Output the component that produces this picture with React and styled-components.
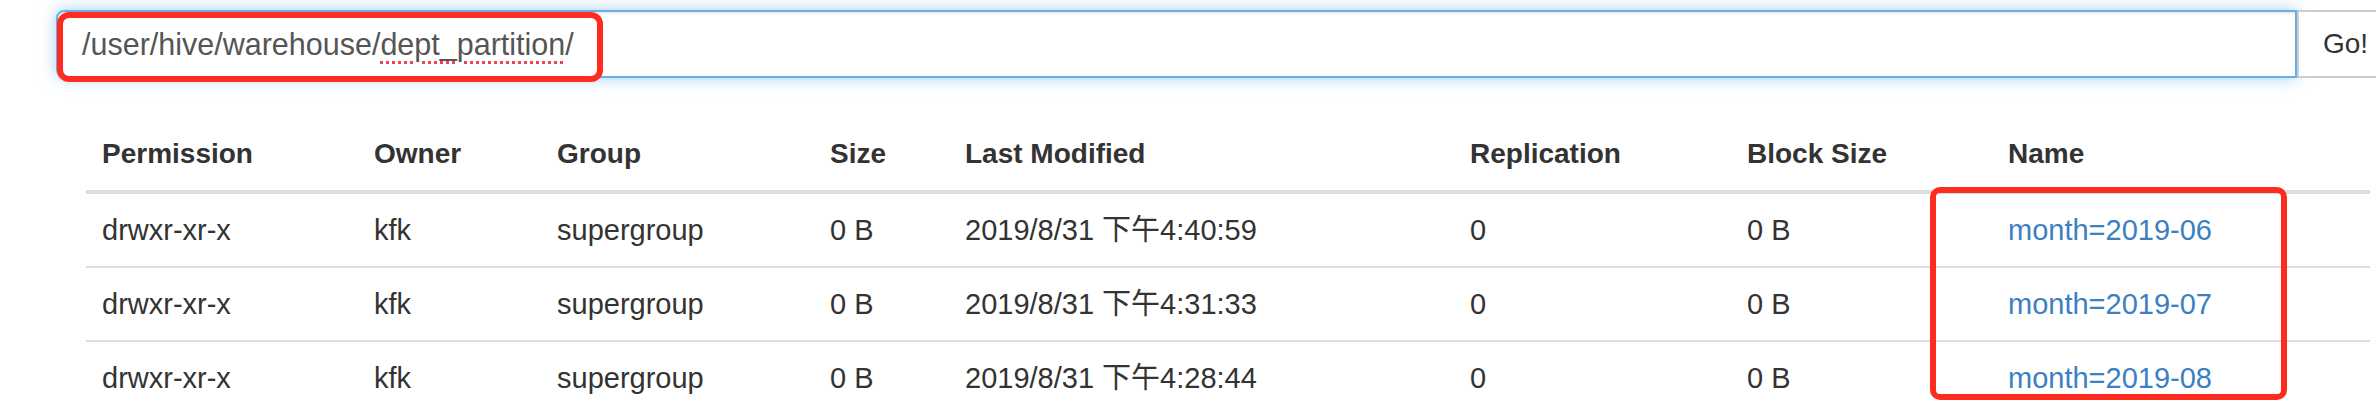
import React from "react";
import styled, { createGlobalStyle } from "styled-components";

const GlobalStyle = createGlobalStyle`
  html, body {
    margin: 0;
    padding: 0;
    overflow: hidden;
    background: #fff;
  }
  body {
    font-family: "Liberation Sans", "Noto Sans CJK SC", sans-serif;
    font-size: 28px;
    line-height: 40px;
    color: #333;
  }
`;

const Page = styled.div`
  padding: 10px 0 0 56px;
  width: 2400px;
`;

const InputGroup = styled.div`
  position: relative;
  display: flex;
  height: 68px;
`;

const Field = styled.div`
  box-sizing: border-box;
  width: 2241px;
  height: 68px;
  padding: 12px 24px;
  border: 2px solid #66afe9;
  border-radius: 8px 0 0 8px;
  box-shadow: inset 0 2px 2px rgba(0, 0, 0, 0.075),
    0 0 16px rgba(102, 175, 233, 0.6);
  font-size: 30.5px;
  line-height: 40px;
  color: #555;
  white-space: nowrap;
`;

const Misspelled = styled.span`
  text-decoration: underline dotted #e9474d;
  text-decoration-thickness: 3px;
  text-underline-offset: 6px;
`;

const GoButton = styled.button`
  box-sizing: border-box;
  height: 68px;
  padding: 12px 24px;
  border: 2px solid #ccc;
  border-radius: 0 8px 8px 0;
  background: #fff;
  color: #333;
  font-family: inherit;
  font-size: 28px;
  line-height: 40px;
`;

const Highlight = styled.div`
  position: absolute;
  left: ${(p) => p.left}px;
  top: ${(p) => p.top}px;
  width: ${(p) => p.width}px;
  height: ${(p) => p.height}px;
  box-sizing: border-box;
  border: 6px solid #fe2c1e;
  border-radius: ${(p) => p.radius || 10}px;
  pointer-events: none;
`;

const TableWrap = styled.div`
  position: relative;
  margin: 40px 0 0 30px;
  width: 2284px;
`;

const Table = styled.table`
  width: 100%;
  border-collapse: collapse;
  table-layout: fixed;
`;

const Th = styled.th`
  text-align: left;
  vertical-align: bottom;
  padding: 16px;
  font-weight: bold;
  border-bottom: 4px solid #ddd;
  white-space: nowrap;
`;

const Td = styled.td`
  padding: 16px;
  border-top: 2px solid #ddd;
  font-size: 29px;
  white-space: nowrap;
`;

const NameLink = styled.a`
  color: #3b80c2;
  text-decoration: none;
`;

const columns = [
  { title: "Permission", width: 272 },
  { title: "Owner", width: 183 },
  { title: "Group", width: 273 },
  { title: "Size", width: 135 },
  { title: "Last Modified", width: 505 },
  { title: "Replication", width: 277 },
  { title: "Block Size", width: 261 },
  { title: "Name" },
];

const rows = [
  { modified: "2019/8/31 下午4:40:59", name: "month=2019-06" },
  { modified: "2019/8/31 下午4:31:33", name: "month=2019-07" },
  { modified: "2019/8/31 下午4:28:44", name: "month=2019-08" },
];

const App = () => {
  return (
    <Page>
      <GlobalStyle />
      <InputGroup>
        <Field>
          /user/hive/warehouse/<Misspelled>dept_partition</Misspelled>/
        </Field>
        <GoButton type="button">Go!</GoButton>
        <Highlight left={1} top={2} width={546} height={70} radius={12} />
      </InputGroup>
      <TableWrap>
        <Table>
          <colgroup>
            {columns.map((c) => (
              <col key={c.title} style={c.width ? { width: c.width } : undefined} />
            ))}
          </colgroup>
          <thead>
            <tr>
              {columns.map((c) => (
                <Th key={c.title}>{c.title}</Th>
              ))}
            </tr>
          </thead>
          <tbody>
            {rows.map((r) => (
              <tr key={r.name}>
                <Td>drwxr-xr-x</Td>
                <Td>kfk</Td>
                <Td>supergroup</Td>
                <Td>0 B</Td>
                <Td>{r.modified}</Td>
                <Td>0</Td>
                <Td>0 B</Td>
                <Td>
                  <NameLink href="#">{r.name}</NameLink>
                </Td>
              </tr>
            ))}
          </tbody>
        </Table>
        <Highlight left={1844} top={69} width={357} height={213} radius={10} />
      </TableWrap>
    </Page>
  );
};

export default App;
